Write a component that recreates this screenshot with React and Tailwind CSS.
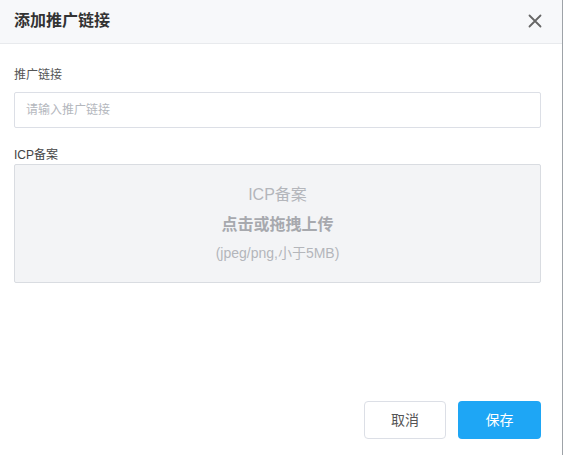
export default function App() {
  const font = { fontFamily: '"Liberation Sans", "Noto Sans CJK SC", sans-serif' };
  return (
    <div className="flex w-[565px] h-[455px] bg-white overflow-hidden" style={font}>
      <div className="w-[562px] h-full flex flex-col bg-white">
        <div className="h-[44px] bg-[#f7f8fa] border-b border-[#e8eaed] flex items-center justify-between pl-[14px] pr-[20px] shrink-0">
          <span className="text-[16px] font-bold text-[#333] leading-none pb-[2px]">添加推广链接</span>
          <svg width="14" height="14" viewBox="0 0 14 14" className="mb-[2px]">
            <path d="M1.5 1.5 L12.5 12.5 M12.5 1.5 L1.5 12.5" stroke="#666" strokeWidth="1.8" strokeLinecap="round" />
          </svg>
        </div>
        <div className="pl-[14px] pr-[21px] pt-[22px] flex flex-col">
          <div className="text-[12px] leading-[18px] text-[#555]">推广链接</div>
          <div className="mt-[8px] h-[36px] border border-[#dcdfe6] rounded-[2px] flex items-center px-[11px]">
            <span className="text-[12px] text-[#b4b7bd]">请输入推广链接</span>
          </div>
          <div className="mt-[18px] text-[12px] leading-[18px] text-[#444]">ICP备案</div>
          <div className="h-[119px] border border-[#d9dce1] bg-[#f3f4f6] rounded-[2px] flex flex-col items-center pt-[18px]">
            <div className="text-[16px] leading-[24px] text-[#b4b6bb]">ICP备案</div>
            <div className="mt-[6px] text-[16px] leading-[24px] font-bold text-[#a7a9ae]">点击或拖拽上传</div>
            <div className="mt-[6px] text-[14px] leading-[20px] text-[#b4b6bb]">(jpeg/png,小于5MB)</div>
          </div>
          <div className="mt-[118px] flex justify-end gap-[12px]">
            <button className="w-[82px] h-[38px] border border-[#dcdfe6] rounded-[4px] bg-white text-[14px] text-[#555]">取消</button>
            <button className="w-[83px] h-[38px] rounded-[4px] bg-[#1ea6f5] text-[14px] text-white">保存</button>
          </div>
        </div>
      </div>
      <div className="w-px h-full bg-[#9ea3a8]"></div>
      <div className="flex-1 bg-white"></div>
    </div>
  );
}
